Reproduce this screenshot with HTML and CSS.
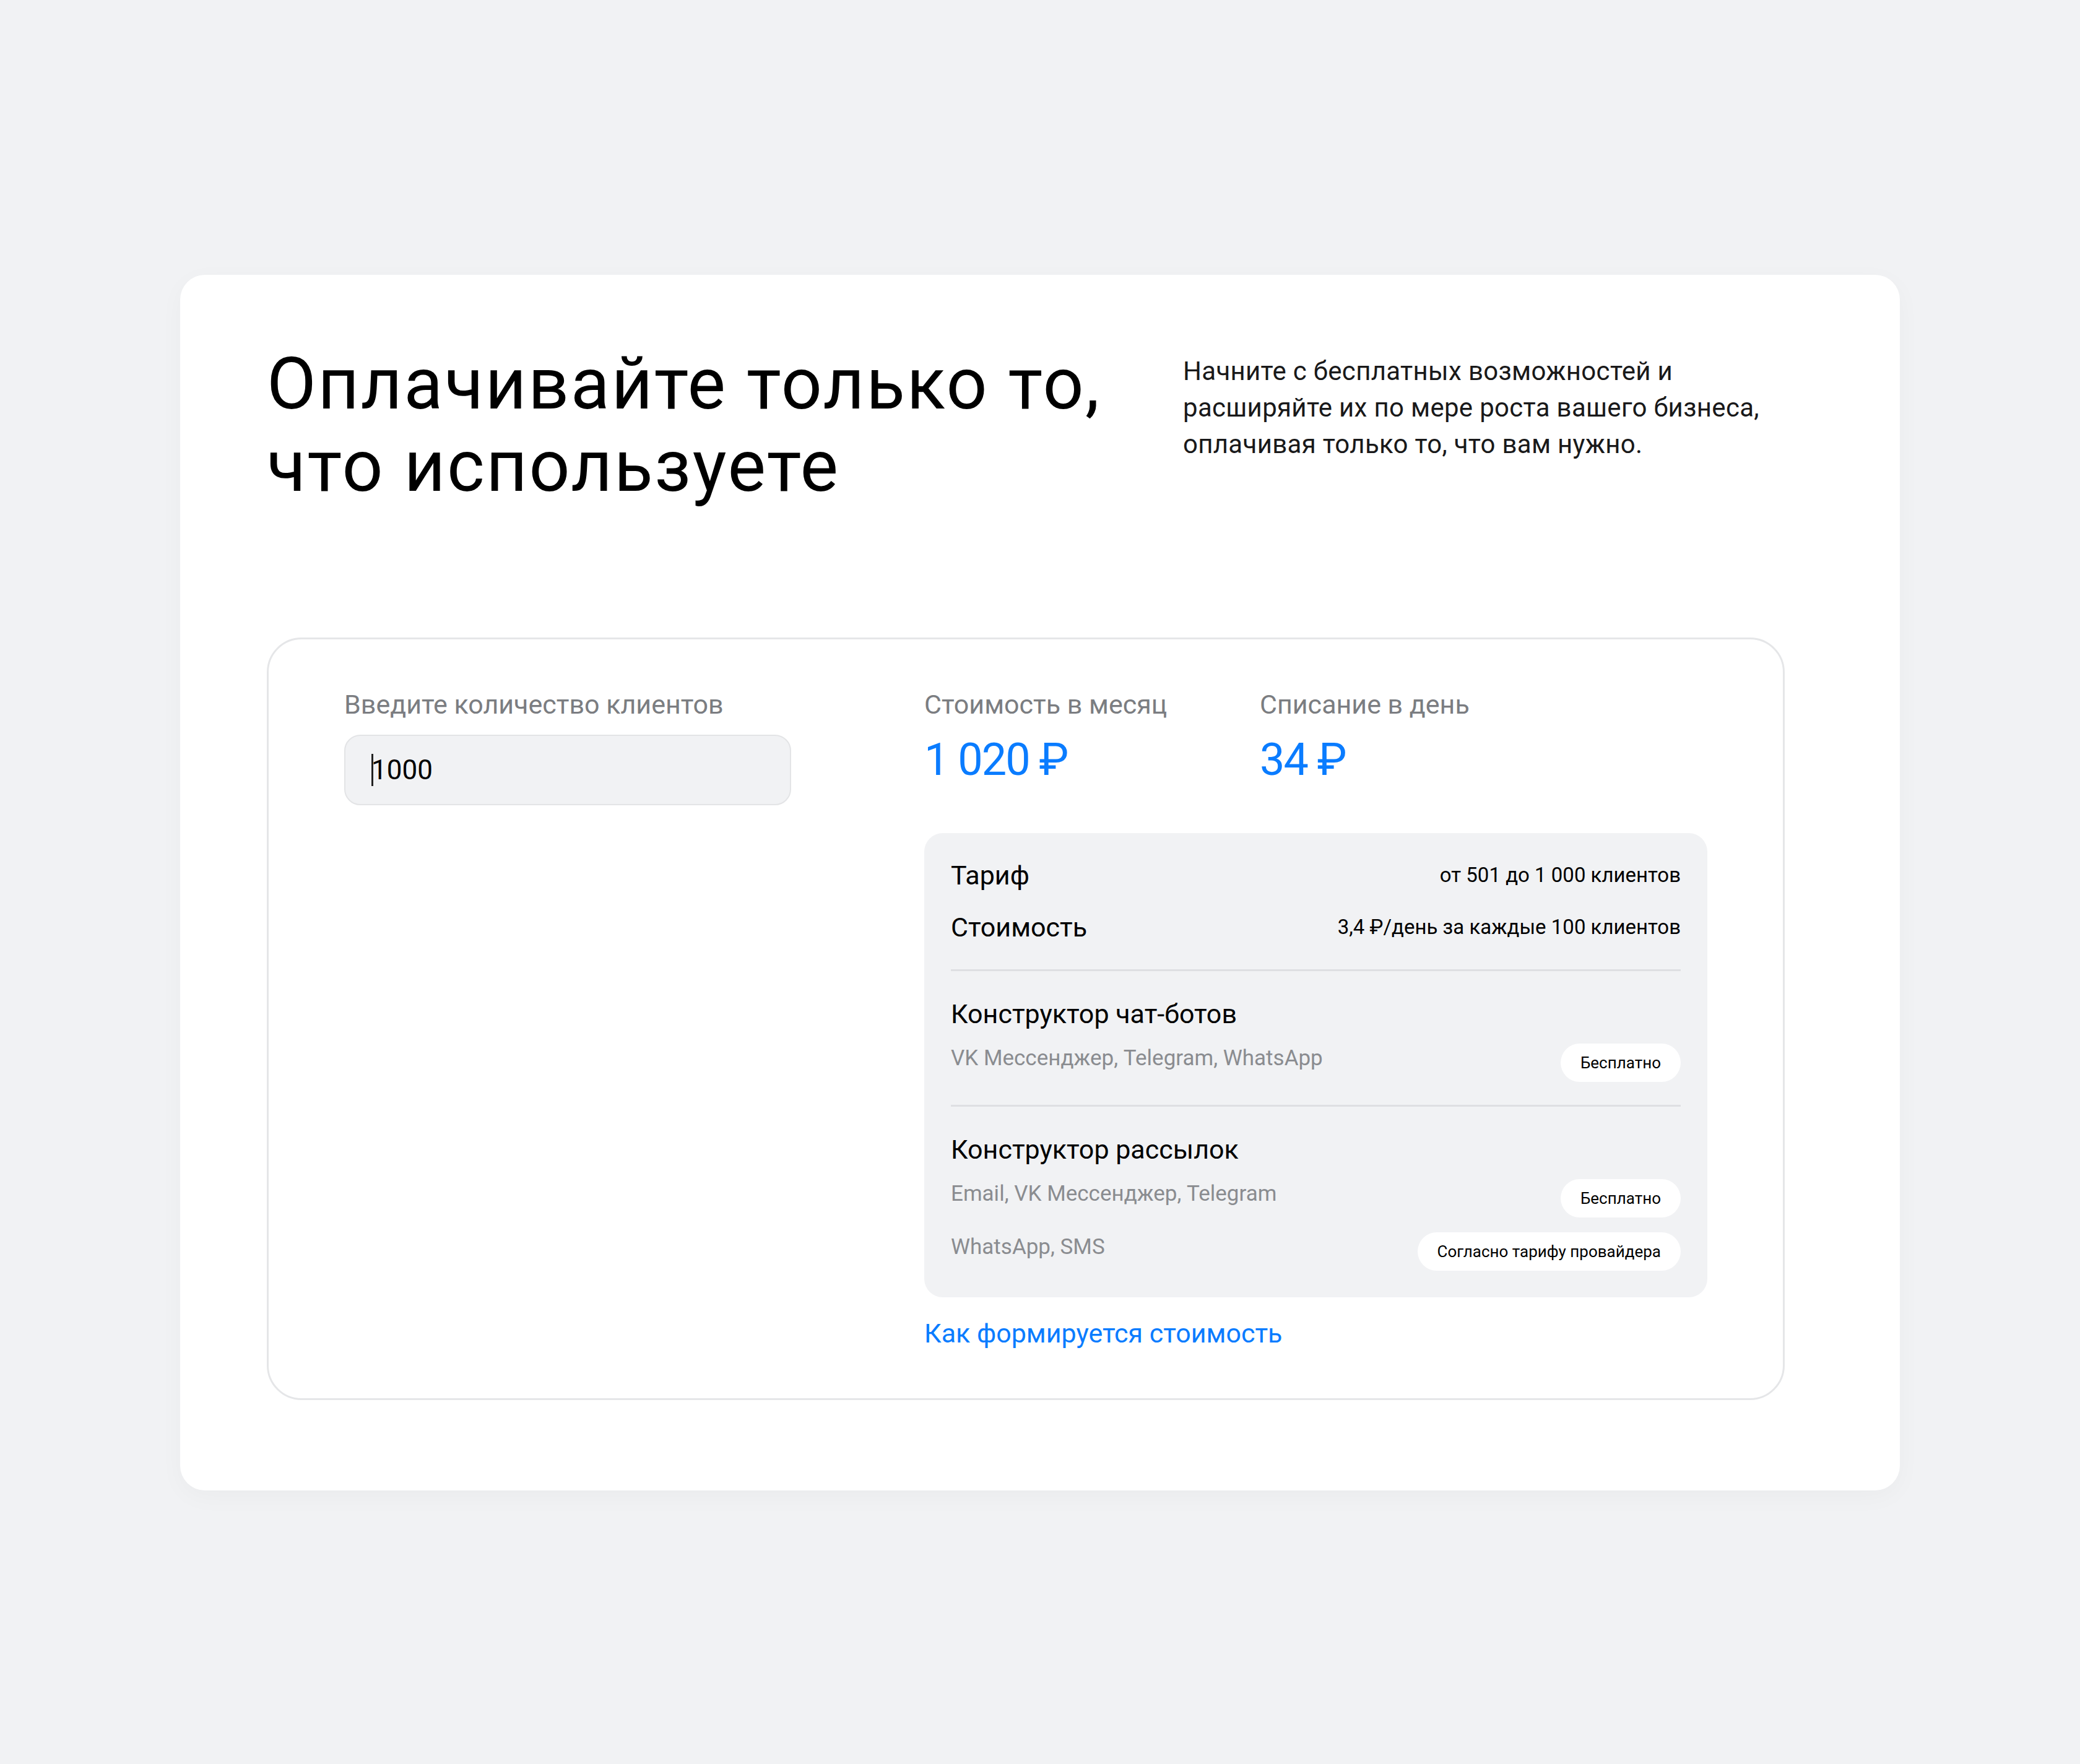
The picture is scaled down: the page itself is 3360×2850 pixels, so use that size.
FILE: index.html
```html
<!DOCTYPE html>
<html lang="ru">
<head>
	<meta charset="utf-8">
	<title>Тарифы</title>
	<link rel="stylesheet" href="styles.css">
</head>
<body>
	<main class="page">
		<section class="pricing">
			<header class="pricing-head">
				<h1 class="pricing-title">Оплачивайте только то,<br>что используете</h1>
				<p class="pricing-lead">Начните с бесплатных возможностей и<br>расширяйте их по мере роста вашего бизнеса,<br>оплачивая только то, что вам нужно.</p>
			</header>

			<div class="calc">
				<div class="calc-input">
					<div class="calc-label">Введите количество клиентов</div>
					<div class="calc-field"><span class="caret"></span>1000</div>
				</div>

				<div class="calc-result">
					<div class="totals">
						<div class="total">
							<div class="calc-label">Стоимость в месяц</div>
							<div class="total-value">1&nbsp;020&nbsp;₽</div>
						</div>
						<div class="total">
							<div class="calc-label">Списание в день</div>
							<div class="total-value">34&nbsp;₽</div>
						</div>
					</div>

					<div class="details">
						<div class="details-row">
							<span>Тариф</span>
							<span class="details-note">от 501 до 1&nbsp;000 клиентов</span>
						</div>
						<div class="details-row">
							<span>Стоимость</span>
							<span class="details-note">3,4 ₽/день за каждые 100 клиентов</span>
						</div>

						<div class="feature">
							<div class="feature-title">Конструктор чат-ботов</div>
							<div class="feature-row">
								<span class="feature-channels">VK Мессенджер, Telegram, WhatsApp</span>
								<span class="badge">Бесплатно</span>
							</div>
						</div>

						<div class="feature">
							<div class="feature-title">Конструктор рассылок</div>
							<div class="feature-row">
								<span class="feature-channels">Email, VK Мессенджер, Telegram</span>
								<span class="badge">Бесплатно</span>
							</div>
							<div class="feature-row">
								<span class="feature-channels">WhatsApp, SMS</span>
								<span class="badge">Согласно тарифу провайдера</span>
							</div>
						</div>
					</div>

					<a class="calc-link" href="#">Как формируется стоимость</a>
				</div>
			</div>
		</section>
	</main>
</body>
</html>
```

FILE: styles.css
```css
html {
	background: #f1f2f4;
	color: #000;
	font-family: Roboto, "Noto Sans", sans-serif;
}

body {
	margin: 0;
}

.page {
	padding: 444px 0 444px;
}

.pricing {
	width: 2778px;
	box-sizing: border-box;
	margin: 0 auto;
	padding: 110px 186px 146px 140px;
	background: #fff;
	border-radius: 40px;
	box-shadow: 0 10px 40px rgba(0, 0, 0, .03);
}

/* header */

.pricing-head {
	display: flex;
	align-items: flex-start;
}

.pricing-title {
	width: 1480px;
	flex: none;
	margin: 0;
	font-size: 116px;
	line-height: 133px;
	font-weight: 400;
	letter-spacing: 2.5px;
}

.pricing-lead {
	margin: 16px 0 0;
	font-size: 42px;
	line-height: 59px;
	letter-spacing: .3px;
	color: #19191a;
}

/* calculator */

.calc {
	margin-top: 210px;
	display: grid;
	grid-template-columns: 722px 1fr;
	column-gap: 215px;
	padding: 81px 122px;
	border: 3px solid #e5e6e8;
	border-radius: 56px;
}

.calc-label {
	font-size: 43px;
	line-height: 48px;
	color: #7b7d81;
}

.calc-field {
	display: flex;
	align-items: center;
	height: 114px;
	box-sizing: border-box;
	margin-top: 25px;
	padding: 0 42px;
	background: #f1f2f4;
	border: 2px solid #e3e4e6;
	border-radius: 26px;
	font-size: 44px;
}

.caret {
	width: 3px;
	height: 52px;
	margin-right: -3px;
	background: #222;
}

.totals {
	display: flex;
}

.total {
	width: 542px;
}

.total-value {
	margin-top: 23px;
	font-size: 72px;
	line-height: 86px;
	letter-spacing: -2px;
	color: #0a7cff;
}

.details {
	margin-top: 75px;
	padding: 44px 43px 43px;
	background: #f1f2f4;
	border-radius: 30px;
}

.details-row {
	display: flex;
	justify-content: space-between;
	align-items: center;
	font-size: 43px;
	line-height: 48px;
}

.details-row + .details-row {
	margin-top: 36px;
}

.details-note {
	font-size: 33px;
}

.feature {
	margin-top: 44px;
	padding-top: 45px;
	border-top: 3px solid #dedfe2;
}

.feature + .feature {
	margin-top: 37px;
}

.feature-title {
	font-size: 43px;
	line-height: 48px;
}

.feature-row {
	display: flex;
	justify-content: space-between;
	align-items: flex-start;
	margin-top: 24px;
}

.feature-channels {
	font-size: 35px;
	line-height: 48px;
	color: #8a8c90;
}

.badge {
	height: 62px;
	line-height: 62px;
	padding: 0 32px;
	background: #fff;
	border-radius: 31px;
	font-size: 26px;
}

.calc-link {
	display: block;
	margin-top: 34px;
	font-size: 43px;
	line-height: 48px;
	color: #0a7cff;
	text-decoration: none;
}
```
